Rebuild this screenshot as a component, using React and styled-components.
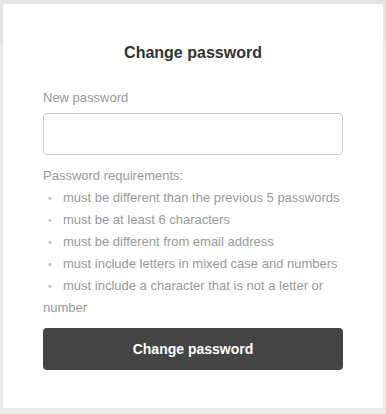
import React from "react";
import styled, { createGlobalStyle } from "styled-components";

const requisitos = [
  "must be different than the previous 5 passwords",
  "must be at least 6 characters",
  "must be different from email address",
  "must include letters in mixed case and numbers",
  "must include a character that is not a letter or number",
];

const Global = createGlobalStyle`
  html, body {
    margin: 0;
    height: 100%;
  }
  body {
    background: linear-gradient(#e4e4e4 0, #e4e4e4 43px, #ebebeb 43px);
    font-family: "Liberation Sans", Arial, sans-serif;
  }
`;

const Pagina = styled.div`
  padding: 4px 3px;
`;

const Tarjeta = styled.div`
  background: #fff;
  width: 380px;
  box-sizing: border-box;
  padding: 38px 40px 38px;
  border-radius: 2px;
`;

const Titulo = styled.h2`
  margin: 0 0 23px;
  font-size: 16px;
  line-height: 22px;
  font-weight: bold;
  color: #333;
  text-align: center;
`;

const Etiqueta = styled.label`
  display: block;
  font-size: 13px;
  line-height: 22px;
  color: #999;
  margin-bottom: 4px;
`;

const Campo = styled.input`
  display: block;
  width: 100%;
  height: 42px;
  box-sizing: border-box;
  border: 1px solid #ccc;
  border-radius: 4px;
  padding: 0 10px;
  font-size: 14px;
  font-family: inherit;
  outline: none;
`;

const Requisitos = styled.div`
  margin-top: 10px;
  font-size: 13px;
  line-height: 22px;
  color: #999;
`;

const Lista = styled.ul`
  list-style: none;
  margin: 0;
  padding: 0;
`;

const Item = styled.li`
  &::before {
    content: "•";
    display: inline-block;
    width: 20px;
    box-sizing: border-box;
    padding-left: 5px;
    color: #bdbdbd;
    font-size: 11px;
  }
`;

const Boton = styled.button`
  display: block;
  width: 100%;
  height: 42px;
  margin-top: 9px;
  border: none;
  border-radius: 4px;
  background: #444;
  color: #fff;
  font-family: inherit;
  font-size: 14px;
  font-weight: bold;
  cursor: pointer;
`;

export default function App() {
  return (
    <>
      <Global />
      <Pagina>
        <Tarjeta>
          <Titulo>Change password</Titulo>
          <Etiqueta htmlFor="nueva">New password</Etiqueta>
          <Campo id="nueva" type="password" />
          <Requisitos>
            Password requirements:
            <Lista>
              {requisitos.map((r) => (
                <Item key={r}>{r}</Item>
              ))}
            </Lista>
          </Requisitos>
          <Boton>Change password</Boton>
        </Tarjeta>
      </Pagina>
    </>
  );
}
